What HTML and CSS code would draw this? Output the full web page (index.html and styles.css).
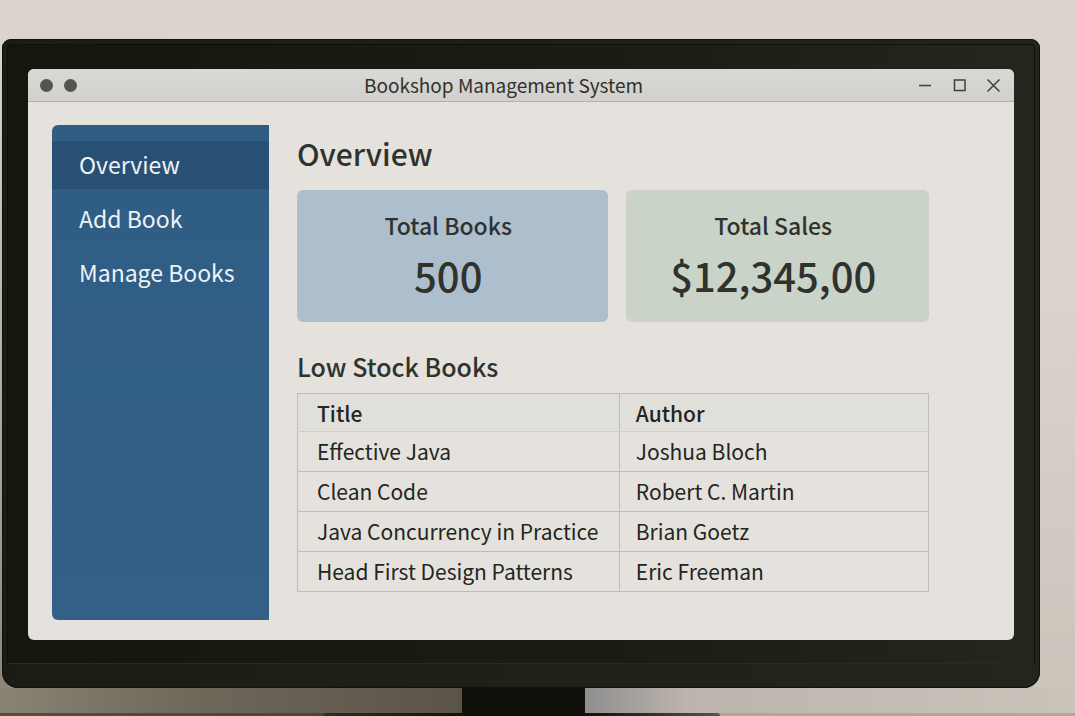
FILE: index.html
```html
<!DOCTYPE html>
<html lang="en">
<head>
<meta charset="utf-8">
<meta name="viewport" content="width=device-width, initial-scale=1">
<title>Bookshop Management System</title>
<link rel="stylesheet" href="styles.css">
</head>
<body>
<div class="scene">
  <div class="monitor">
    <div class="bezel">
      <div class="window">
        <header class="titlebar">
          <div class="dots"><span class="dot"></span><span class="dot"></span></div>
          <h1 class="window-title">Bookshop Management System</h1>
          <div class="controls">
            <button class="control" type="button" aria-label="Minimize"><svg viewBox="0 0 14 14" width="14" height="14"><path d="M1 7.500h12"/></svg></button>
            <button class="control" type="button" aria-label="Maximize"><svg viewBox="0 0 14 14" width="14" height="14"><path d="M2.500 2h10.500v10.500H2.500z"/></svg></button>
            <button class="control" type="button" aria-label="Close"><svg viewBox="0 0 14 14" width="14" height="14"><path d="M1.500 1.500l12 12M13.500 1.500L1.500 13.500"/></svg></button>
          </div>
        </header>
        <div class="content">
          <nav class="sidebar" aria-label="Main">
            <a class="nav-link active" href="#overview" aria-current="page">Overview</a>
            <a class="nav-link" href="#add">Add Book</a>
            <a class="nav-link" href="#manage">Manage Books</a>
          </nav>
          <main class="main" id="overview">
            <h2 class="page-title">Overview</h2>
            <div class="cards">
              <section class="card books">
                <h3 class="card-label">Total Books</h3>
                <p class="card-value">500</p>
              </section>
              <section class="card sales">
                <h3 class="card-label">Total Sales</h3>
                <p class="card-value">$12,345,00</p>
              </section>
            </div>
            <h3 class="section-title" id="low-stock">Low Stock Books</h3>
            <table class="stock" aria-labelledby="low-stock">
              <thead>
                <tr><th scope="col">Title</th><th scope="col">Author</th></tr>
              </thead>
              <tbody>
                <tr><td>Effective Java</td><td>Joshua Bloch</td></tr>
                <tr><td>Clean Code</td><td>Robert C. Martin</td></tr>
                <tr><td>Java Concurrency in Practice</td><td>Brian Goetz</td></tr>
                <tr><td>Head First Design Patterns</td><td>Eric Freeman</td></tr>
              </tbody>
            </table>
          </main>
        </div>
      </div>
    </div>
  </div>
  <div class="floor">
    <div class="stand"></div>
    <div class="desk"><div class="base"></div></div>
  </div>
</div>
</body>
</html>
```
FILE: styles.css
```css
* { box-sizing: border-box; }

body {
  margin: 0;
  font-family: "Noto Sans CJK SC", "Noto Sans", sans-serif;
  color: #2f322d;
}

h1, h2, h3, p { margin: 0; }

.scene {
  min-height: 100vh;
  display: flex;
  flex-direction: column;
  padding: 39px 0 0;
  background:
    linear-gradient(to bottom, transparent 5%, #b9aea2 50%, #8b8276) left / 20px 100% no-repeat,
    linear-gradient(to bottom, #dcd3cd, #dcd3cd 40%, #cbc2ba);
}

.monitor {
  flex: 1;
  display: flex;
  margin: 0 35px 0 2px;
  padding: 5px 5px 24px;
  border-radius: 9px 9px 16px 16px;
  background: linear-gradient(to right, #1b1c14, #24251d);
  box-shadow: inset 0 0 1px 1px #11120c;
}

.bezel {
  flex: 1;
  display: flex;
  padding: 24px 20px 23px 20px;
  border: 1px solid #0e0f09;
  border-bottom-color: #292b23;
  border-radius: 5px 5px 2px 2px;
  background: linear-gradient(to right, #15160e, #1b1c14 60%, #25261e);
}

.window {
  flex: 1;
  display: flex;
  flex-direction: column;
  border-radius: 6px;
  overflow: hidden;
  background: #e5e2dd;
}

.titlebar {
  display: grid;
  grid-template-columns: 1fr auto 1fr;
  align-items: center;
  height: 33px;
  padding: 0 14px 0 12px;
  border-bottom: 1px solid #b3b1ad;
  background: linear-gradient(to bottom, #d9d8d4, #d1d0cc);
}

.dots { display: flex; gap: 11px; }

.dot {
  width: 13px;
  height: 13px;
  border-radius: 50%;
  background: #53534f;
}

.window-title {
  padding-right: 33px;
  font-size: 19px;
  line-height: 32px;
  font-weight: 400;
}

.controls { display: flex; gap: 20px; justify-content: flex-end; }

.control {
  display: flex;
  padding: 0;
  border: 0;
  background: none;
}

.control svg {
  fill: none;
  stroke: #3f3f3c;
  stroke-width: 1.500;
}

.content {
  flex: 1;
  display: grid;
  grid-template-columns: 217px 1fr;
  gap: 28px;
  padding: 23px 85px 20px 24px;
}

.sidebar {
  padding: 16px 0;
  border-radius: 6px 0 0 6px;
  background: linear-gradient(to bottom, #2f5d84, #345f87);
}

.nav-link {
  display: block;
  margin-bottom: 6px;
  padding: 0 27px 2px;
  font-size: 23px;
  line-height: 46px;
  color: #eef3f7;
  text-decoration: none;
}

.nav-link.active { background: #285074; }

.main { min-width: 0; }

.page-title {
  padding-top: 8px;
  font-size: 30px;
  line-height: 40px;
  font-weight: 500;
}

.cards {
  display: grid;
  grid-template-columns: 310fr 303fr;
  gap: 18px;
  margin-top: 17px;
}

.card {
  padding: 19px 8px 13px 0;
  border-radius: 6px;
  text-align: center;
}

.books { background: #adbfcd; }
.sales { background: #c9d3c8; }

.card-label {
  font-size: 23px;
  line-height: 32px;
  font-weight: 500;
}

.card-value {
  font-size: 40px;
  line-height: 68px;
  font-weight: 500;
}

.section-title {
  margin-top: 24px;
  font-size: 25px;
  line-height: 40px;
  font-weight: 500;
}

.stock {
  width: 100%;
  margin-top: 7px;
  border-collapse: collapse;
  table-layout: fixed;
  font-size: 21px;
  line-height: 36px;
  color: #232521;
}

.stock th,
.stock td {
  padding: 0 16px 2px;
  border: 1px solid #bfbdb9;
  text-align: left;
}

.stock td { height: 40px; }

.stock th {
  width: 49%;
  height: 38px;
  padding-bottom: 0;
  font-weight: 500;
  background: #e1dfda;
  border-bottom-color: #d0cecb;
}

.stock th:first-child { width: 51%; }

.stock th:first-child,
.stock td:first-child { padding-left: 19px; }

.stock td:first-child { padding-right: 8px; }

.floor {
  height: 28px;
  display: flex;
  flex-direction: column;
  background: linear-gradient(to right, #8b8276, #6f675a 18%, #5a5448 43%, #929190 55%, #bdb4ae 64%, #cbc2ba);
}

.stand {
  flex: 1;
  width: 123px;
  margin-left: 43%;
  background: #10110b;
}

.desk {
  height: 3px;
  background: linear-gradient(to right, #5c4c38, #4e4433 30%, #b5a592 68%, #b5a592);
}

.base {
  width: 37%;
  height: 3px;
  margin-left: 30%;
  border-radius: 6px 6px 0 0;
  background: linear-gradient(to right, #2c2e28, #10110b 36%, #10110b 66%, #55534d);
}
```
